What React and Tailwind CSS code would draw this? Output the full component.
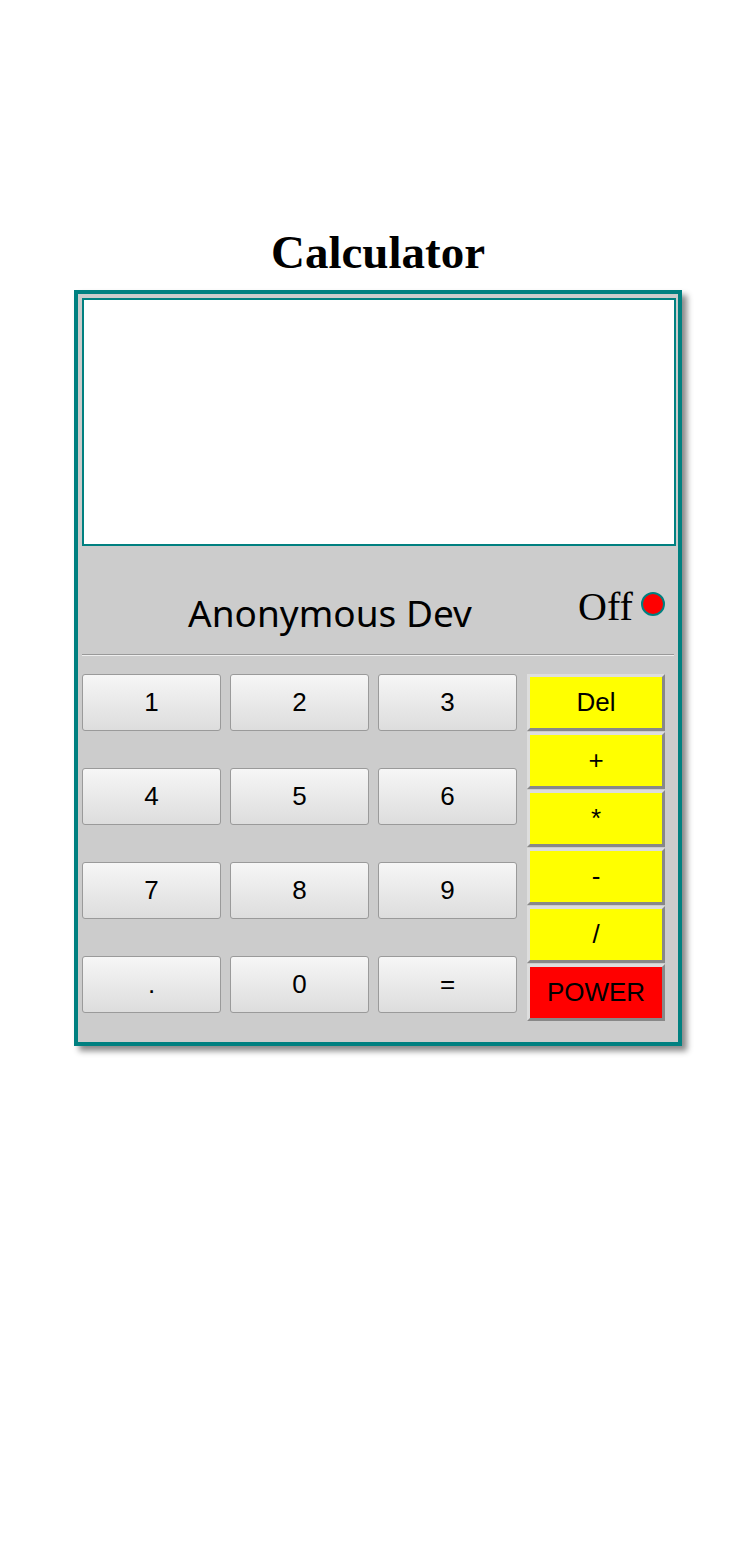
import React from "react";

const nums = ["1", "2", "3", "4", "5", "6", "7", "8", "9", ".", "0", "="];
const ops = ["Del", "+", "*", "-", "/"];

export default function App() {
  return (
    <div className="min-h-[1568px] bg-white">
      <div className="ml-[74px] w-[608px] pt-[226px]">
        <h1 className="text-center font-bold text-[47px] leading-[53px] text-black font-['Liberation_Serif',serif]">
          Calculator
        </h1>
        <div className="mt-[11px] border-4 border-[#008080] bg-[#cccccc] pt-1 pl-1 pr-[2px] pb-[21px] shadow-[5px_5px_6px_#8a8a8a]">
          <div className="h-[248px] w-[594px] border-2 border-[#008080] bg-white"></div>
          <div className="flex h-[108px] items-start">
            <div className="mt-[47px] w-[496px] text-center text-[37px] leading-[40px] text-black font-['Comic_Sans_MS','Noto_Sans',sans-serif]">
              Anonymous Dev
            </div>
            <div className="mt-[41px] w-[53px] text-right text-[40px] leading-[40px] text-black font-['Liberation_Serif',serif]">
              Off
            </div>
            <div className="mt-[46px] ml-[10px] h-[24px] w-[24px] rounded-full border-2 border-[#008080] bg-[#ff0000]"></div>
          </div>
          <div className="w-[592px] border-t border-b border-t-[#999999] border-b-[#eeeeee]"></div>
          <div className="mt-[18px] flex items-start">
            <div className="grid grid-cols-[139px_139px_139px] gap-x-[9px] gap-y-[37px]">
              {nums.map((n) => (
                <button
                  key={n}
                  className="flex h-[57px] items-center justify-center rounded-[3px] border border-[#9a9a9a] bg-gradient-to-b from-[#f6f6f6] to-[#dddddd] text-[26px] text-black font-['Liberation_Sans',sans-serif]"
                >
                  {n}
                </button>
              ))}
            </div>
            <div className="ml-[10px] flex w-[138px] flex-col gap-[1px]">
              {ops.map((o) => (
                <button
                  key={o}
                  className="flex h-[57px] items-center justify-center border-[3px] border-t-[#dddddd] border-l-[#dddddd] border-r-[#888888] border-b-[#888888] bg-[#ffff00] text-[26px] text-black font-['Liberation_Sans',sans-serif]"
                >
                  {o}
                </button>
              ))}
              <button className="flex h-[57px] items-center justify-center border-[3px] border-t-[#dddddd] border-l-[#dddddd] border-r-[#888888] border-b-[#888888] bg-[#ff0000] text-[26px] text-black font-['Liberation_Sans',sans-serif]">
                POWER
              </button>
            </div>
          </div>
        </div>
      </div>
    </div>
  );
}
